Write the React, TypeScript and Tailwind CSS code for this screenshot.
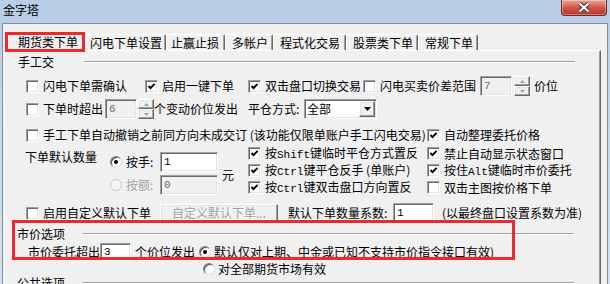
import React from "react";

const sunken =
  "border border-t-[#a0a0a0] border-l-[#a0a0a0] border-b-white border-r-white shadow-[inset_1px_1px_0_#696969,inset_-1px_-1px_0_#e3e3e3]";
const raised =
  "border border-t-white border-l-white border-b-[#696969] border-r-[#696969] shadow-[inset_-1px_-1px_0_#a0a0a0,inset_1px_1px_0_#e3e3e3]";

function Check({ checked }: { checked?: boolean }) {
  return (
    <span className={"w-[13px] h-[13px] shrink-0 bg-white flex items-center justify-center " + sunken}>
      {checked && (
        <svg width="9" height="9" viewBox="0 0 9 9">
          <path d="M1.5 4 L3.5 6.2 L7.6 1.8" stroke="#000" strokeWidth="1.9" fill="none" />
        </svg>
      )}
    </span>
  );
}

function Radio({ checked, disabled }: { checked?: boolean; disabled?: boolean }) {
  return (
    <span
      className={
        disabled
          ? "w-[12px] h-[12px] shrink-0 rounded-full bg-[#f4f4f4] border border-[#c8c8c8]"
          : "w-[12px] h-[12px] shrink-0 rounded-full bg-white border border-t-[#808080] border-l-[#808080] border-b-[#e0e0e0] border-r-[#e0e0e0] shadow-[inset_1px_1px_0_#505050] flex items-center justify-center"
      }
    >
      {checked && <span className="w-[4px] h-[4px] rounded-full bg-black" />}
    </span>
  );
}

function Field({ className, value, disabled }: { className: string; value: string; disabled?: boolean }) {
  return (
    <span
      className={
        "shrink-0 flex items-center pl-[3px] font-['Liberation_Mono',monospace] text-[11px] " +
        (disabled ? "bg-[#f0f0f0] text-[#6d6d6d] " : "bg-white text-black ") +
        sunken +
        " " +
        className
      }
    >
      {value}
    </span>
  );
}

function Spin({ className }: { className: string }) {
  return (
    <span className={"flex flex-col w-[16px] h-[20px] shrink-0 " + className}>
      <span className={"h-[10px] bg-[#f0f0f0] flex items-center justify-center " + raised}>
        <svg width="5" height="3" viewBox="0 0 5 3">
          <path d="M0 3 L2.5 0 L5 3 Z" fill="#a0a0a0" />
        </svg>
      </span>
      <span className={"h-[10px] bg-[#f0f0f0] flex items-center justify-center " + raised}>
        <svg width="5" height="3" viewBox="0 0 5 3">
          <path d="M0 0 L2.5 3 L5 0 Z" fill="#a0a0a0" />
        </svg>
      </span>
    </span>
  );
}

function Cb({ checked, className, children }: { checked?: boolean; className?: string; children: React.ReactNode }) {
  return (
    <div className={"flex items-center gap-[4px] whitespace-nowrap shrink-0 " + (className || "")}>
      <Check checked={checked} />
      <span>{children}</span>
    </div>
  );
}

function Header({ label, className }: { label: string; className: string }) {
  return (
    <div className={"flex items-center h-[14px] " + className}>
      <span className="w-[66px] shrink-0">{label}</span>
      <span className="w-[491px] h-[2px] border-t border-b border-t-[#a0a0a0] border-b-white" />
    </div>
  );
}

function Mono({ children }: { children: React.ReactNode }) {
  return <span className="font-['Liberation_Mono',monospace] text-[11px]">{children}</span>;
}

function Tab({ label, className }: { label: string; className: string }) {
  return (
    <div
      className={
        "h-[16px] flex items-center whitespace-nowrap rounded-t-[2px] border-t border-l border-white border-r border-r-[#696969] shadow-[inset_-1px_0_0_#a0a0a0] " +
        className
      }
    >
      {label}
    </div>
  );
}

export default function App() {
  return (
    <div className="relative w-[610px] h-[284px] overflow-hidden bg-gradient-to-b from-[#b8cde6] via-[#c7d8ec] to-[#d3e1f1] font-['Noto_Sans_CJK_SC',sans-serif] text-[12px] leading-[14px] text-black">
      {/* title bar */}
      <div className="h-[23px] flex justify-between items-start">
        <span className="ml-[3px] mt-[3px] text-[12px] leading-[14px]">金字塔</span>
        <div className="mr-[3px] w-[46px] h-[16px] rounded-b-[4px] border border-t-0 border-[#6e2a22] bg-gradient-to-b from-[#eaa699] via-[#d0564a] to-[#bb3224] shadow-[inset_0_0_0_1px_rgba(255,255,255,0.35)] flex items-center justify-center">
          <svg width="14" height="11" viewBox="0 0 14 11">
            <path d="M2.5 1.5 L11.5 9.5 M11.5 1.5 L2.5 9.5" stroke="#4a3535" strokeWidth="4.2" />
            <path d="M2.5 1.5 L11.5 9.5 M11.5 1.5 L2.5 9.5" stroke="#ffffff" strokeWidth="2.2" />
          </svg>
        </div>
      </div>

      {/* client area */}
      <div className="mx-[2px] h-[261px] bg-[#f0f0f0] border-t border-l border-r border-[#7f8fa3] pt-[8px] flex flex-col">
        {/* tabs */}
        <div className="ml-[2px] h-[18px] flex items-end">
          <div className="relative z-10 -mb-px h-[19px] w-[80px] pl-[12px] flex items-center bg-[#f0f0f0] rounded-t-[2px] border-t border-l border-white border-r border-r-[#696969] shadow-[inset_-1px_0_0_#a0a0a0] whitespace-nowrap">
            期货类下单
          </div>
          <Tab label="闪电下单设置" className="w-[81px] pl-[4px]" />
          <Tab label="止赢止损" className="w-[59px] pl-[4px]" />
          <Tab label="多帐户" className="w-[48px] pl-[6px]" />
          <Tab label="程式化交易" className="w-[73px] pl-[6px]" />
          <Tab label="股票类下单" className="w-[72px] pl-[6px]" />
          <Tab label="常规下单" className="w-[60px] pl-[6px]" />
        </div>

        {/* panel */}
        <div className="ml-[1px] w-[597px] flex-1 bg-[#f0f0f0] border-t border-l border-white border-r border-r-[#696969] shadow-[inset_-1px_0_0_#a0a0a0] flex flex-col">
          <Header label="手工交" className="mt-[4px] ml-[13px]" />

          {/* R1 */}
          <div className="mt-[7px] h-[20px] flex items-center pl-[21px]">
            <Cb className="w-[119px]">闪电下单需确认</Cb>
            <Cb checked className="w-[103px]">启用一键下单</Cb>
            <Cb checked className="w-[115px]">双击盘口切换交易</Cb>
            <Cb>闪电买卖价差范围</Cb>
            <Field className="ml-[4px] w-[32px] h-[20px]" value="7" disabled />
            <Spin className="ml-[2px]" />
            <span className="ml-[4px]">价位</span>
          </div>

          {/* R2 */}
          <div className="mt-[3px] h-[20px] flex items-center pl-[21px]">
            <div className="w-[222px] flex items-center shrink-0 whitespace-nowrap">
              <Check />
              <span className="ml-[4px]">下单时超出</span>
              <Field className="ml-[2px] w-[32px] h-[20px]" value="6" disabled />
              <Spin className="ml-[1px]" />
              <span>个变动价位发出</span>
            </div>
            <span className="w-[56px] shrink-0">平仓方式:</span>
            <span className={"w-[73px] h-[20px] bg-white flex items-center " + sunken}>
              <span className="flex-1 pl-[2px]">全部</span>
              <span className={"w-[16px] h-[16px] mr-[1px] bg-[#f0f0f0] flex items-center justify-center " + raised}>
                <svg width="7" height="4" viewBox="0 0 7 4">
                  <path d="M0 0 L7 0 L3.5 4 Z" fill="#000" />
                </svg>
              </span>
            </span>
          </div>

          {/* R3 */}
          <div className="mt-[8px] h-[16px] flex items-center pl-[21px]">
            <Cb className="w-[401px]">手工下单自动撤销之前同方向未成交订 (该功能仅限单账户手工闪电交易)</Cb>
            <Cb checked>自动整理委托价格</Cb>
          </div>

          {/* block */}
          <div className="mt-[2px] h-[52px] flex">
            <div className="w-[243px] shrink-0 flex pl-[20px]">
              <span className="w-[85px] shrink-0 mt-[5px] h-[14px] whitespace-nowrap">下单默认数量</span>
              <div className="flex flex-col mt-[7px]">
                <div className="h-[20px] flex items-center">
                  <Radio checked />
                  <span className="ml-[4px] w-[34px]">按手:</span>
                  <Field className="w-[58px] h-[20px]" value="1" />
                </div>
                <div className="mt-[3px] h-[20px] flex items-center">
                  <Radio disabled />
                  <span className="ml-[4px] w-[34px] text-[#a0a0a0] [text-shadow:1px_1px_0_#ffffff]">按额:</span>
                  <Field className="w-[58px] h-[20px]" value="0" disabled />
                </div>
              </div>
              <span className="ml-[4px] mt-[23px] h-[14px]">元</span>
            </div>
            <div className="w-[179px] shrink-0 flex flex-col">
              <Cb checked className="h-[17px]">
                按<Mono>Shift</Mono>键临时平仓方式置反
              </Cb>
              <Cb checked className="h-[17px]">
                按<Mono>Ctrl</Mono>键平仓反手 (单账户)
              </Cb>
              <Cb checked className="h-[17px]">
                按<Mono>Ctrl</Mono>键双击盘口方向置反
              </Cb>
            </div>
            <div className="flex flex-col">
              <Cb checked className="h-[17px]">禁止自动显示状态窗口</Cb>
              <Cb checked className="h-[17px]">
                按住<Mono>Alt</Mono>键临时市价委托
              </Cb>
              <Cb className="h-[17px]">双击主图按价格下单</Cb>
            </div>
          </div>

          {/* R7 */}
          <div className="mt-[6px] h-[20px] flex items-center pl-[21px]">
            <Cb className="w-[134px]">启用自定义默认下单</Cb>
            <span
              className={
                "w-[118px] h-[18px] shrink-0 bg-[#f0f0f0] flex items-center justify-center text-[#a0a0a0] [text-shadow:1px_1px_0_#ffffff] " +
                raised
              }
            >
              自定义默认下单...
            </span>
            <span className="ml-[10px] w-[105px] shrink-0 whitespace-nowrap">默认下单数量系数:</span>
            <Field className="w-[41px] h-[20px]" value="1" />
            <span className="ml-[8px] whitespace-nowrap">(以最终盘口设置系数为准)</span>
          </div>

          <Header label="市价选项" className="mt-[4px] ml-[12px]" />

          {/* M1 */}
          <div className="mt-[2px] h-[18px] flex items-center pl-[23px] whitespace-nowrap">
            <span className="w-[72px] shrink-0">市价委托超出</span>
            <Field className="w-[31px] h-[18px]" value="3" />
            <span className="ml-[4px] w-[64px] shrink-0">个价位发出</span>
            <Radio checked />
            <span className="ml-[3px]">默认仅对上期、中金或已知不支持市价指令接口有效)</span>
          </div>

          {/* M2 */}
          <div className="h-[16px] flex items-center pl-[198px] whitespace-nowrap">
            <Radio />
            <span className="ml-[3px]">对全部期货市场有效</span>
          </div>

          <Header label="公共选项" className="-mt-px ml-[12px]" />
        </div>
      </div>

      {/* annotation rectangles */}
      <div className="absolute left-[5px] top-[32px] w-[80px] h-[20px] border-[3px] border-[#ec2a2e] pointer-events-none z-20" />
      <div className="absolute left-[12px] top-[220px] w-[503px] h-[40px] border-[3px] border-[#ec2a2e] pointer-events-none z-20" />
    </div>
  );
}
